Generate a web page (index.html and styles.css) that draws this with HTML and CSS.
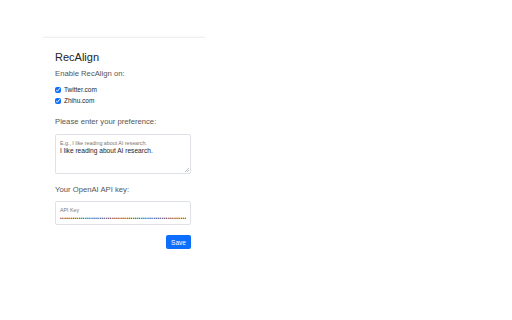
FILE: index.html
```html
<!DOCTYPE html>
<html lang="en">
<head>
    <meta charset="UTF-8" />
    <meta name="viewport" content="width=device-width, initial-scale=1.0" />
    <title>RecAlign</title>
    <link rel="stylesheet" href="styles.css">
</head>
<body>
    <div class="popup">
        <h1>RecAlign</h1>
        <p class="label">Enable RecAlign on:</p>

        <div class="sites">
            <label class="check"><input type="checkbox" checked> Twitter.com</label>
            <label class="check"><input type="checkbox" checked> Zhihu.com</label>
        </div>

        <p class="label">Please enter your preference:</p>
        <div class="field field-area">
            <span class="float">E.g., I like reading about AI research.</span>
            <textarea id="preference">I like reading about AI research.</textarea>
            <svg class="grip" width="5" height="5" viewBox="0 0 5 5">
                <path d="M5 1 L1 5 M5 3 L3 5" stroke="#999" stroke-width="0.6"/>
            </svg>
        </div>

        <p class="label">Your OpenAI API key:</p>
        <div class="field field-key">
            <span class="float">API Key</span>
            <input type="password" id="api-key" value="sk-xxxxxxxxxxxxxxxxxxxxxxxxxxxxxxxxxxxxxxxxxxxxxxxxxxxxxxxxxxxxxxxxx">
        </div>

        <div class="actions">
            <button class="save">Save</button>
        </div>
    </div>
</body>
</html>
```

FILE: styles.css
```css
body {
    font-family: "Liberation Sans", Arial, sans-serif;
    background-color: #ffffff;
    margin: 0;
    padding: 37px 0 0 43px;
    color: #212529;
}

.popup {
    width: 136px;
    padding: 12px 14px 20px 12px;
    border-top: 1px solid #f0f0f0;
    box-shadow: 0 -1px 2px rgba(0, 0, 0, 0.03);
}

.popup h1 {
    font-size: 11px;
    font-weight: normal;
    margin: 0 0 5px 0;
    line-height: 14px;
}

.label {
    font-size: 7.7px;
    color: #555;
    margin: 0;
    line-height: 10px;
}

/* Site checkboxes */
.sites {
    display: flex;
    flex-direction: column;
    gap: 3px;
    margin: 7px 0 12px 0;
}

.check {
    display: flex;
    align-items: center;
    gap: 3px;
    font-size: 6.5px;
    line-height: 8px;
    color: #212529;
}

.check input {
    width: 6px;
    height: 6px;
    margin: 0;
    accent-color: #0d6efd;
}

/* Floating fields */
.field {
    position: relative;
    border: 1px solid #dee2e6;
    border-radius: 2px;
    margin-top: 7px;
    padding: 5px 4px 0 4px;
    box-sizing: border-box;
}

.field-area {
    height: 40px;
    margin-bottom: 11px;
}

.field-key {
    height: 24px;
    margin-top: 6px;
    margin-bottom: 10px;
}

.float {
    display: block;
    font-size: 5.3px;
    line-height: 6px;
    color: #777;
}

.field textarea,
.field input {
    display: block;
    width: 100%;
    border: none;
    outline: none;
    padding: 0;
    margin: 0;
    resize: none;
    font-family: "Liberation Sans", Arial, sans-serif;
    font-size: 6.6px;
    line-height: 9px;
    color: #212529;
    background: transparent;
}

.field textarea {
    height: 26px;
    overflow: hidden;
}

.field input {
    font-size: 4.5px;
    letter-spacing: 0.5px;
    color: #444;
    height: 9px;
    margin-top: 1px;
    overflow: hidden;
}

.grip {
    position: absolute;
    right: 1px;
    bottom: 1px;
}

.actions {
    display: flex;
    justify-content: flex-end;
}

.save {
    background-color: #0d6efd;
    color: white;
    border: none;
    border-radius: 2px;
    font-family: "Liberation Sans", Arial, sans-serif;
    font-size: 6.5px;
    width: 25px;
    height: 14px;
    padding: 0;
    cursor: pointer;
}
```
